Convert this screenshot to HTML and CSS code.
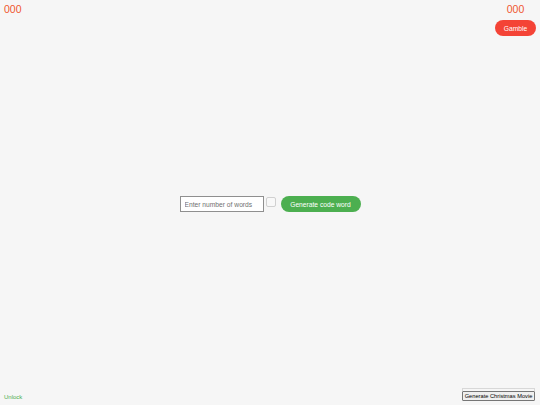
FILE: index.html
```html
<!DOCTYPE html>
<html>
<head>
<meta charset="utf-8">
<link rel="stylesheet" href="styles.css">
</head>
<body>
<div class="page">
  <header class="top">
    <div class="score score-left">000</div>
    <div class="right-col">
      <div class="score">000</div>
      <button class="gamble">Gamble</button>
    </div>
  </header>
  <main class="center">
    <input class="words" type="text" placeholder="Enter number of words">
    <input class="check" type="checkbox">
    <button class="generate">Generate code word</button>
  </main>
  <footer class="bottom">
    <a class="unlock">Unlock</a>
    <div class="movie">
      <div class="movie-out"></div>
      <button class="movie-btn">Generate Christmas Movie</button>
    </div>
  </footer>
</div>
</body>
</html>
```
FILE: styles.css
```css
html, body {
  margin: 0;
  padding: 0;
  background: #f6f6f6;
  font-family: "Liberation Sans", Arial, sans-serif;
}
.page {
  width: 540px;
  height: 405px;
  display: flex;
  flex-direction: column;
  box-sizing: border-box;
}
.top {
  display: flex;
  justify-content: space-between;
  align-items: flex-start;
  padding: 2px 4px 0 4px;
}
.score {
  font-size: 10.5px;
  line-height: 14px;
  color: #f0572f;
}
.right-col {
  display: flex;
  flex-direction: column;
  align-items: center;
  gap: 4px;
}
.gamble {
  background: #f44336;
  color: #fff;
  border: none;
  border-radius: 8px;
  width: 41px;
  height: 16px;
  font-family: "Liberation Sans", Arial, sans-serif;
  font-size: 6.7px;
  padding: 0;
}
.center {
  flex: 1;
  display: flex;
  justify-content: center;
  align-items: center;
  padding-bottom: 16px;
}
.words {
  width: 84px;
  height: 16px;
  box-sizing: border-box;
  border: 1px solid #8f8f8f;
  background: #fff;
  font-family: "Liberation Sans", Arial, sans-serif;
  font-size: 6.7px;
  padding: 0 1px 0 4px;
  margin: 0;
}
.words::placeholder { color: #707070; }
.check {
  appearance: none;
  -webkit-appearance: none;
  width: 10px;
  height: 10px;
  box-sizing: border-box;
  border: 1px solid #d0d0d0;
  border-radius: 2px;
  background: #f8f8f8;
  margin: 0 5px 5px 2px;
}
.generate {
  background: #4caf50;
  color: #fff;
  border: none;
  border-radius: 8px;
  width: 80px;
  height: 16px;
  font-family: "Liberation Sans", Arial, sans-serif;
  font-size: 6.7px;
  padding: 0;
}
.bottom {
  display: flex;
  justify-content: space-between;
  align-items: flex-end;
  padding: 0 5px 4px 4px;
}
.unlock {
  color: #4caf50;
  font-size: 6px;
  line-height: 8px;
}
.movie {
  display: flex;
  flex-direction: column;
  width: 73px;
}
.movie-out {
  height: 2px;
  border: 1px solid #d8d8d8;
  border-bottom: none;
}
.movie-btn {
  height: 10px;
  padding: 0;
  font-family: "Liberation Sans", Arial, sans-serif;
  font-size: 5.7px;
  background: #efefef;
  border: 1px solid #767676;
  border-radius: 1px;
  color: #000;
}
```
